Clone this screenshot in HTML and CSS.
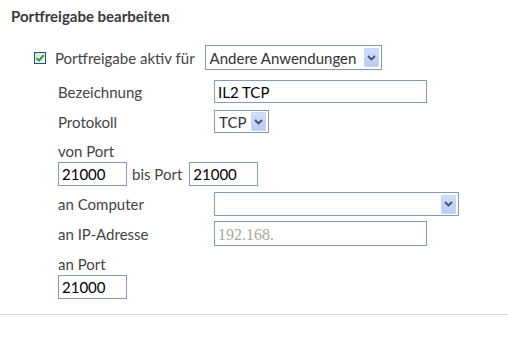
FILE: index.html
```html
<!DOCTYPE html>
<html lang="de">
<head>
  <meta charset="UTF-8" />
  <title>Portfreigabe bearbeiten</title>
  <link rel="stylesheet" href="styles.css">
</head>
<body>
  <div class="page">
    <h2 class="title">Portfreigabe bearbeiten</h2>

    <div class="active-row">
      <span class="checkbox checked">
        <svg width="10" height="10" viewBox="0 0 10 10"><path d="M1.5 5.2 L4 7.6 L8.6 2.2" fill="none" stroke="#1e9f2a" stroke-width="2"/></svg>
      </span>
      <span class="active-label">Portfreigabe aktiv für</span>
      <div class="dropdown app-select">
        <span class="dropdown-value">Andere Anwendungen</span>
        <span class="dropdown-arrow">
          <svg width="9" height="6" viewBox="0 0 9 6"><path d="M1 1 L4.5 4.5 L8 1" fill="none" stroke="#3f5277" stroke-width="1.8"/></svg>
        </span>
      </div>
    </div>

    <div class="fields">
      <div class="row">
        <span class="label">Bezeichnung</span>
        <input class="text wide" type="text" value="IL2 TCP">
      </div>
      <div class="row">
        <span class="label">Protokoll</span>
        <div class="dropdown proto-select">
          <span class="dropdown-value">TCP</span>
          <span class="dropdown-arrow">
            <svg width="9" height="6" viewBox="0 0 9 6"><path d="M1 1 L4.5 4.5 L8 1" fill="none" stroke="#3f5277" stroke-width="1.8"/></svg>
          </span>
        </div>
      </div>

      <span class="label stacked">von Port</span>
      <div class="port-row">
        <input class="text port" type="text" value="21000">
        <span class="label between">bis Port</span>
        <input class="text port" type="text" value="21000">
      </div>

      <div class="row computer-row">
        <span class="label">an Computer</span>
        <div class="dropdown pc-select">
          <span class="dropdown-value"></span>
          <span class="dropdown-arrow">
            <svg width="9" height="6" viewBox="0 0 9 6"><path d="M1 1 L4.5 4.5 L8 1" fill="none" stroke="#3f5277" stroke-width="1.8"/></svg>
          </span>
        </div>
      </div>
      <div class="row ip-row">
        <span class="label">an IP-Adresse</span>
        <input class="text wide ip" type="text" placeholder="192.168.">
      </div>

      <span class="label stacked to-port">an Port</span>
      <input class="text port" type="text" value="21000">
    </div>

    <hr class="divider">
  </div>
</body>
</html>
```

FILE: styles.css
```css
body {
  margin: 0;
  background: #fff;
  font-family: 'Lato', 'Liberation Sans', sans-serif;
  font-size: 15px;
  color: #444;
}

.page {
  padding-top: 7px;
}

.title {
  margin: 0 0 0 11px;
  font-size: 15px;
  line-height: 18px;
  font-weight: bold;
  color: #3a3a3a;
}

/* Zeile mit Checkbox */
.active-row {
  display: flex;
  align-items: center;
  margin: 20px 0 0 34px;
  height: 25px;
}

.checkbox {
  width: 10px;
  height: 10px;
  border: 1px solid #1c5180;
  background: linear-gradient(135deg, #dcdcd7 0%, #fbfbfa 100%);
  display: flex;
  align-items: center;
  justify-content: center;
}

.active-label {
  margin-left: 9px;
}

.dropdown {
  display: flex;
  align-items: center;
  box-sizing: border-box;
  border: 1px solid #7f9db9;
  background: #fff;
  color: #333;
  padding: 0 2px 0 4px;
}

.dropdown-value {
  flex: 1;
  white-space: nowrap;
}

.dropdown-arrow {
  width: 15px;
  height: 19px;
  box-sizing: border-box;
  border: 1px solid #c8d6f6;
  border-radius: 1px;
  background: linear-gradient(180deg, #d2def9 0%, #b9cbf3 100%);
  display: flex;
  align-items: center;
  justify-content: center;
  margin-left: 4px;
}

.app-select {
  margin-left: 10px;
  width: 177px;
  height: 25px;
}

.proto-select {
  width: 55px;
  height: 23px;
}

.pc-select {
  width: 245px;
  height: 24px;
}

/* Formularfelder */
.fields {
  display: flex;
  flex-direction: column;
  align-items: flex-start;
  margin: 10px 0 0 58px;
}

.row {
  display: flex;
  align-items: center;
  margin-bottom: 7px;
}

.row .label {
  width: 156px;
}

.label {
  line-height: 20px;
}

.label.stacked {
  margin: 1px 0 1px;
}

.label.between {
  margin: 0 7px 0 5px;
}

.text {
  box-sizing: border-box;
  border: 1px solid #7f9db9;
  font-family: 'Lato', 'Liberation Sans', sans-serif;
  font-size: 15px;
  color: #000;
  padding: 0 3px;
  height: 24px;
  outline: none;
}

.text.wide {
  width: 213px;
  height: 23px;
}

.text.port {
  width: 69px;
}

.text.ip {
  height: 25px;
}

.text.ip::placeholder {
  font-family: 'Liberation Serif', serif;
  font-size: 16px;
  color: #aca899;
}

.port-row {
  display: flex;
  align-items: center;
  margin-bottom: 6px;
}

.computer-row {
  margin-bottom: 5px;
}

.ip-row {
  margin-bottom: 7px;
}

.label.to-port {
  margin-top: 1px;
}

.divider {
  margin: 15px 0 0;
  border: 0;
  border-top: 1px solid #d7d7d7;
}
```
